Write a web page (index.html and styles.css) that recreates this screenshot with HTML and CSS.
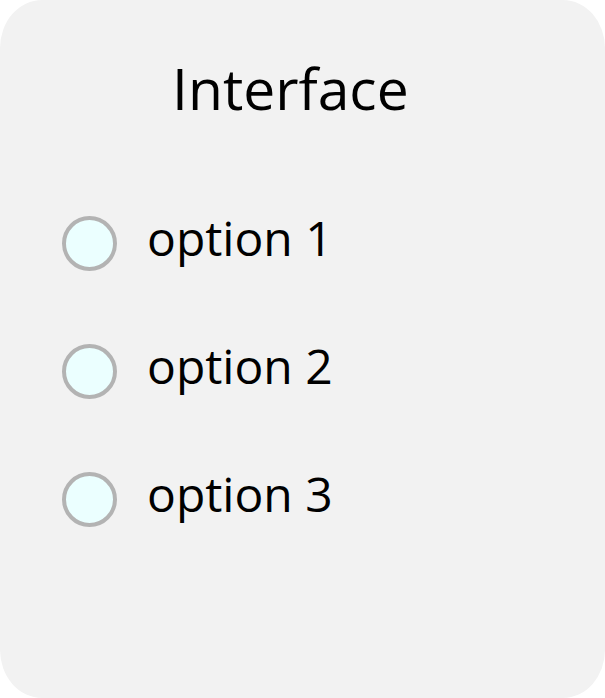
FILE: index.html
```html
<!DOCTYPE html>
<html>
<head>
<meta charset="utf-8">
<link rel="stylesheet" href="styles.css">
</head>
<body>
<div class="card">
  <h1 class="title">Interface</h1>
  <div class="options">
    <label class="option"><span class="radio"></span><span class="label">option 1</span></label>
    <label class="option"><span class="radio"></span><span class="label">option 2</span></label>
    <label class="option"><span class="radio"></span><span class="label">option 3</span></label>
  </div>
</div>
</body>
</html>
```
FILE: styles.css
```css
html, body {
  margin: 0;
  padding: 0;
  background: #ffffff;
}
.card {
  box-sizing: border-box;
  width: 605px;
  height: 698px;
  background: #f2f2f2;
  border-radius: 42px / 48px;
  padding-top: 50px;
  font-family: "Open Sans", "Noto Sans", sans-serif;
  color: #000;
}
.title {
  margin: 0;
  padding-left: 172px;
  font-size: 57px;
  font-weight: 400;
  line-height: 76px;
}
.options {
  display: flex;
  flex-direction: column;
  padding-left: 62px;
  margin-top: 53px;
}
.option {
  display: flex;
  align-items: center;
  height: 128px;
  gap: 30px;
}
.radio {
  box-sizing: border-box;
  width: 55px;
  height: 55px;
  border-radius: 50%;
  border: 4.5px solid #b3b3b3;
  background: #ebffff;
  flex: none;
}
.label {
  font-size: 48px;
  line-height: 62px;
  position: relative;
  top: -5px;
}
```
